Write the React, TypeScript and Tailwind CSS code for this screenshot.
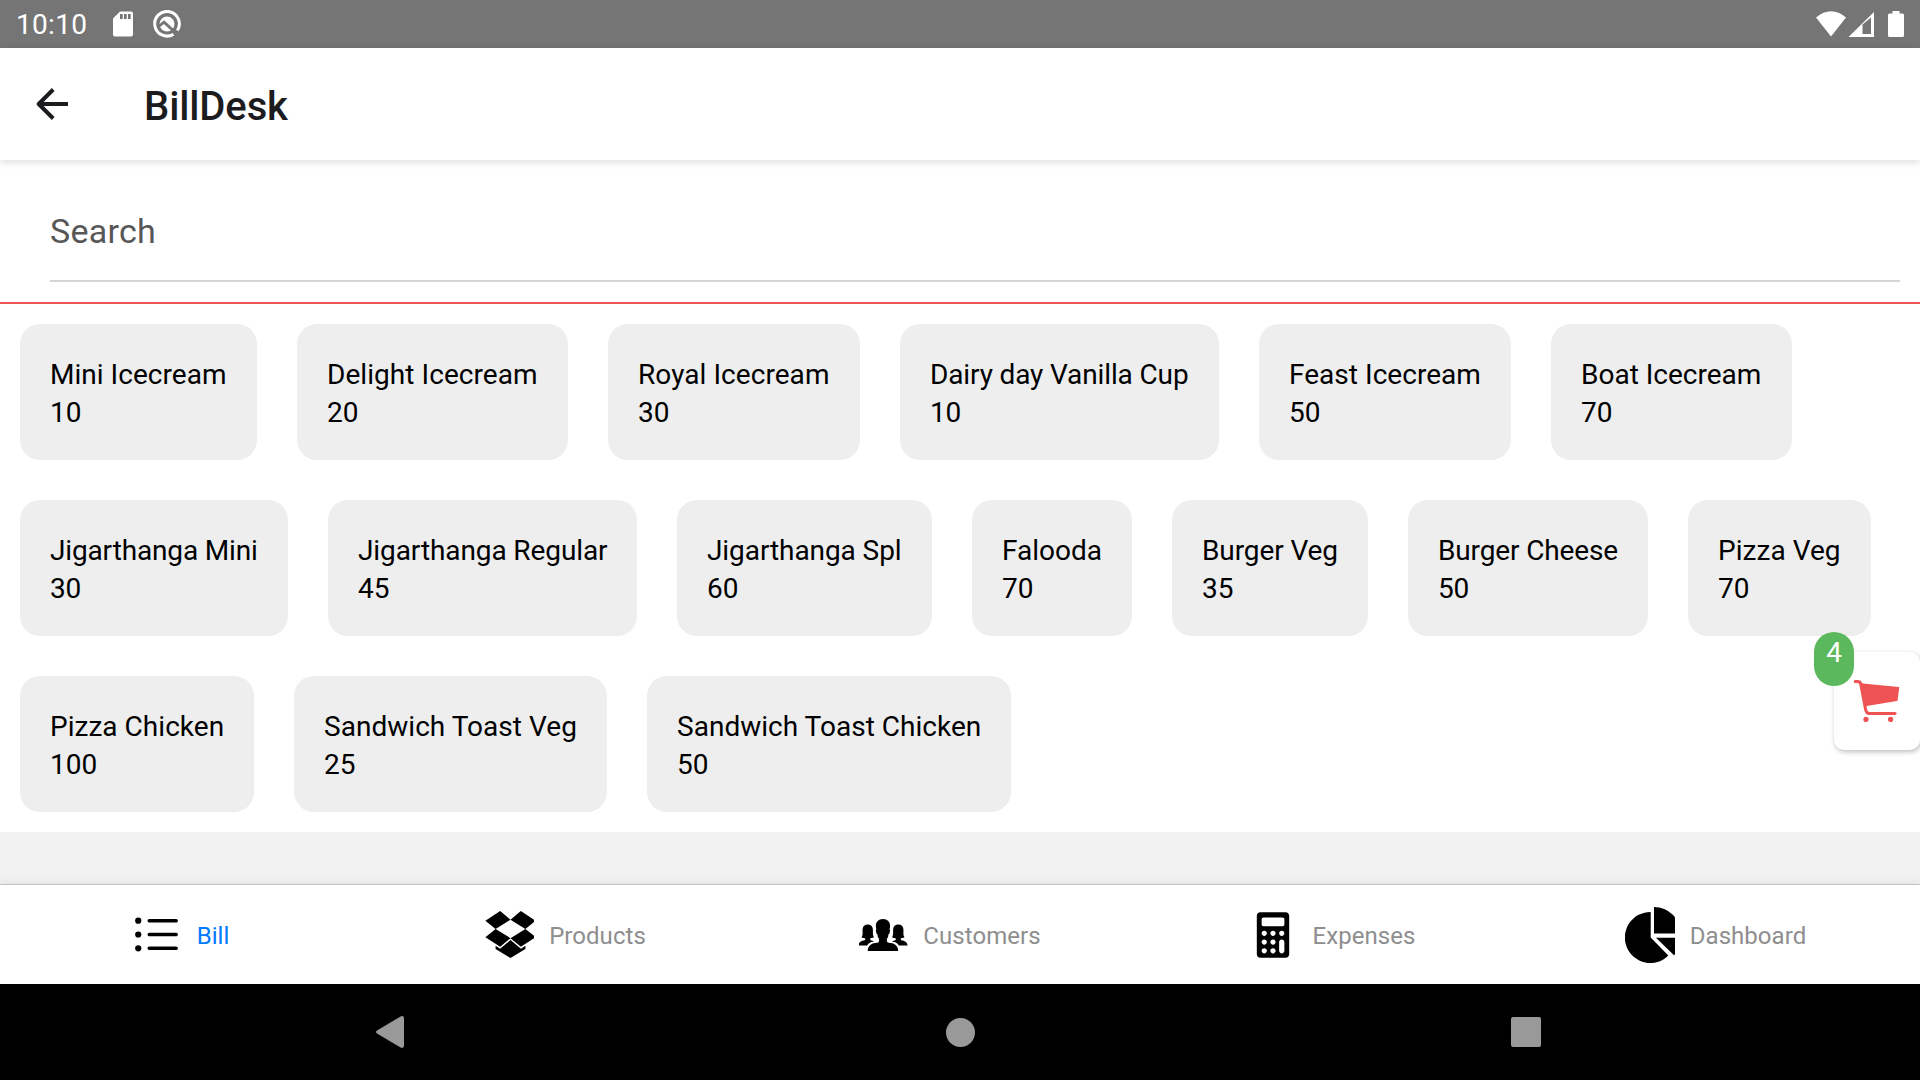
import type { ReactNode } from "react";
import { IoIosList, IoLogoDropbox, IoIosPeople, IoIosCalculator, IoIosCart } from "react-icons/io";

const rows: [string, number, string][][] = [
  [
    ["Mini Icecream", 10, "w-[237px] tracking-[0.03px]"],
    ["Delight Icecream", 20, "w-[271px] tracking-[0.06px]"],
    ["Royal Icecream", 30, "w-[252px] tracking-[0.06px]"],
    ["Dairy day Vanilla Cup", 10, "w-[319px] tracking-[-0.13px]"],
    ["Feast Icecream", 50, "w-[252px] tracking-[0.03px]"],
    ["Boat Icecream", 70, "w-[241px]"],
  ],
  [
    ["Jigarthanga Mini", 30, "w-[268px] tracking-[-0.15px]"],
    ["Jigarthanga Regular", 45, "w-[309px] tracking-[-0.1px]"],
    ["Jigarthanga Spl", 60, "w-[255px] tracking-[-0.08px]"],
    ["Falooda", 70, "w-[160px]"],
    ["Burger Veg", 35, "w-[196px] tracking-[-0.1px]"],
    ["Burger Cheese", 50, "w-[240px] tracking-[-0.13px]"],
    ["Pizza Veg", 70, "w-[183px] tracking-[0.04px]"],
  ],
  [
    ["Pizza Chicken", 100, "w-[234px] tracking-[0.03px]"],
    ["Sandwich Toast Veg", 25, "w-[313px] tracking-[0.03px]"],
    ["Sandwich Toast Chicken", 50, "w-[364px] tracking-[0.02px]"],
  ],
];

function StatusBar() {
  return (
    <div className="flex h-12 shrink-0 items-center justify-between bg-[#757575] pl-4 pr-3 text-white">
      <div className="flex items-center">
        <span className="w-[97px] pt-[2px] text-[28px] leading-[46px] tracking-[0.3px]">10:10</span>
        <svg className="h-[26px] w-5" viewBox="0 0 20 26">
          <path fill="#fff" fillRule="evenodd" d="M7 0.5H18Q20 .5 20 2.500V23.500Q20 25.500 18 25.500H2Q0 25.500 0 23.500V7.500ZM7 3v5h2.700V3ZM11 3v5h2.700V3ZM15 3v5h2.700V3Z" />
        </svg>
        <svg className="ml-5 h-7 w-7" viewBox="0 0 28 28" fill="none">
          <path d="M20.500 24.200A12.300 12.300 0 1 1 24.300 20.500" stroke="#fff" strokeWidth="3" />
          <circle cx="14" cy="14" r="7.500" fill="#fff" />
          <path d="M5.500 16.500 11 12.200 25 25" stroke="#757575" strokeWidth="2.800" />
        </svg>
      </div>
      <svg className="h-12 w-[96px]" viewBox="1812 0 96 48" fill="#fff">
        <path d="M1816 17.500Q1831 5 1846 17.500L1831 36.500Z" />
        <path fillRule="evenodd" d="M1848.500 37 1874 12V37ZM1862.500 24.500V34H1871V17.500Z" />
        <path d="M1892.500 11h7v2.500h3Q1904 13.500 1904 15V35.500Q1904 37 1902.500 37H1889.500Q1888 37 1888 35.500V15Q1888 13.500 1889.500 13.500H1892.500Z" />
      </svg>
    </div>
  );
}

function PieIcon() {
  return (
    <svg className="h-[60px] w-[50px] shrink-0" viewBox="1625 905 50 60" fill="#000">
      <path d="M1650.700 912V937.500L1668.300 955.600A25.500 25.500 0 1 1 1650.700 912Z" />
      <path d="M1654 907A26.600 26.600 0 0 1 1680.600 933.600H1654Z" />
      <path d="M1656 937.700H1682A26 26 0 0 1 1674 955.200Z" />
    </svg>
  );
}

function Tab({ icon, label, active, pad = "pr-[22px]", gap = "gap-[14px]" }: { icon: ReactNode; label: string; active?: boolean; pad?: string; gap?: string }) {
  return (
    <div className={`flex w-[384px] shrink-0 items-center justify-center ${pad} ${gap}`}>
      <div className="flex h-[60px] w-[50px] shrink-0 items-center justify-center overflow-hidden text-black">{icon}</div>
      <span className={`pt-[2px] text-[24px] tracking-[0.05px] ${active ? "text-[#007aff]" : "text-[#8e8e8f]"}`}>{label}</span>
    </div>
  );
}

export default function App() {
  return (
    <div className="flex h-[1080px] w-[1920px] flex-col overflow-hidden bg-[#f2f2f2] font-[Roboto,sans-serif]">
      <StatusBar />
      <header className="relative z-10 flex h-28 shrink-0 items-center bg-white pl-9 shadow-[0_2px_8px_rgba(0,0,0,0.14)]">
        <svg className="h-8 w-8" viewBox="0 0 32 32" fill="none" stroke="#1c1c1e" strokeWidth="4">
          <path d="M32 16H3M17.200 1.500 2.700 16l14.500 14.500" strokeLinejoin="round" />
        </svg>
        <h1 className="ml-[76px] pt-[5px] text-[40px] font-medium tracking-[-0.12px] text-[#1c1c1e]">BillDesk</h1>
      </header>
      <main className="h-[672px] shrink-0 bg-white">
        <div className="flex h-[144px] flex-col border-b-2 border-[#ee5253] pl-[50px] pr-5">
          <div className="flex h-[122px] items-center border-b-2 border-[#d5d5da] pt-[22px] text-[34px] tracking-[0.25px] text-[#575757]">Search</div>
        </div>
        <div className="flex flex-col gap-10 p-5">
          {rows.map((row, i) => (
            <div key={i} className="flex gap-10">
              {row.map(([name, price, size]) => (
                <div key={name} className={`h-[136px] shrink-0 rounded-[20px] bg-[#eeeeee] pl-[30px] pt-8 text-[28px] leading-[38px] whitespace-nowrap text-black ${size}`}>
                  <p>{name}</p>
                  <p>{price}</p>
                </div>
              ))}
            </div>
          ))}
        </div>
      </main>
      <div className="h-[52px] shrink-0" />
      <nav className="flex h-[100px] shrink-0 border-t border-[#c4c4c4] bg-white shadow-[0_-1px_8px_rgba(0,0,0,0.08)]">
        <Tab icon={<IoIosList size={57} className="shrink-0 -translate-x-px" />} label="Bill" active />
        <Tab icon={<IoLogoDropbox size={67} className="shrink-0 translate-x-px" />} label="Products" gap="gap-[15px]" />
        <Tab icon={<IoIosPeople size={56} className="shrink-0 -translate-x-px" />} label="Customers" pad="pr-5" />
        <Tab icon={<IoIosCalculator size={56} className="shrink-0 -translate-x-px" />} label="Expenses" pad="pr-6" />
        <Tab icon={<PieIcon />} label="Dashboard" pad="pr-[25px]" gap="gap-[15px]" />
      </nav>
      <div className="flex h-24 shrink-0 items-center bg-black">
        <svg className="ml-[375px] h-8 w-[29px]" viewBox="0 0 29 32" fill="#999">
          <path d="M25.500.5Q29-1 29 2.500V29.500Q29 33 25.500 31.500L2 17.500Q0 16 2 14.500Z" />
        </svg>
        <div className="ml-[541.5px] h-[29px] w-[29px] rounded-full bg-[#999]" />
        <div className="ml-[536.5px] h-[30px] w-[30px] rounded-[2px] bg-[#999]" />
      </div>
      <div className="absolute left-[1834px] top-[652px] flex h-[98px] w-[86px] items-center justify-center rounded-[10px] bg-white shadow-[1px_2px_5px_rgba(0,0,0,0.26)]">
        <IoIosCart size={56} color="#ee5253" className="shrink-0 -translate-x-[0.5px]" />
      </div>
      <div className="absolute left-[1814px] top-[632px] h-[54px] w-10 rounded-[20px] bg-[#5cb85c] pt-[2px] text-center text-[28px] leading-[38px] text-white">4</div>
    </div>
  );
}
